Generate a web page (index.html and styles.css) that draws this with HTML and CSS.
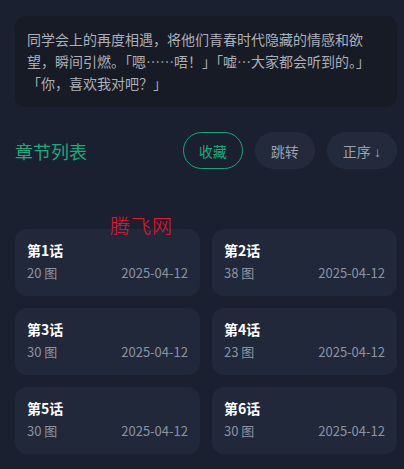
FILE: index.html
```html
<!DOCTYPE html>
<html lang="zh">
<head>
  <meta charset="UTF-8">
  <meta name="viewport" content="width=device-width, initial-scale=1">
  <title>章节列表</title>
  <link rel="stylesheet" href="styles.css">
</head>
<body>
  <div class="desc">同学会上的再度相遇，将他们青春时代隐藏的情感和欲望，瞬间引燃。「嗯……唔！」「嘘…大家都会听到的。」「你，喜欢我对吧？」</div>

  <div class="head">
    <h2>章节列表</h2>
    <div class="actions">
      <button class="fav">收藏</button>
      <button>跳转</button>
      <button>正序 <span class="arrow">↓</span></button>
    </div>
  </div>

  <div class="list">
    <span class="mark">腾飞网</span>
    <div class="card"><div class="name">第1话</div><div class="meta"><span>20 图</span><span>2025-04-12</span></div></div>
    <div class="card"><div class="name">第2话</div><div class="meta"><span>38 图</span><span>2025-04-12</span></div></div>
    <div class="card"><div class="name">第3话</div><div class="meta"><span>30 图</span><span>2025-04-12</span></div></div>
    <div class="card"><div class="name">第4话</div><div class="meta"><span>23 图</span><span>2025-04-12</span></div></div>
    <div class="card"><div class="name">第5话</div><div class="meta"><span>30 图</span><span>2025-04-12</span></div></div>
    <div class="card"><div class="name">第6话</div><div class="meta"><span>30 图</span><span>2025-04-12</span></div></div>
  </div>
</body>
</html>
```

FILE: styles.css
```css
body { margin: 0; padding: 16px 7px 16px 15px; background: #1b2030; font-family: "Noto Sans CJK SC", "Noto Sans", sans-serif; color: #abafb8; }
.desc { background: #171b26; border-radius: 10px; padding: 12px 12px 13px; font-size: 14px; line-height: 22px; }
.head { display: flex; align-items: center; justify-content: space-between; margin-top: 25px; }
h2 { margin: 0; font-size: 18px; font-weight: 400; color: #1aaa7b; }
.actions { display: flex; gap: 12px; }
button { height: 37px; padding: 0 15px; border: 1px solid transparent; border-radius: 19px; background: #222a3c; color: #9aa1ad; font-family: inherit; font-size: 14px; }
button.fav { border-color: #17a878; background: transparent; color: #1aaa7b; }
.arrow { font-family: "Liberation Sans", sans-serif; }
.list { position: relative; display: grid; grid-template-columns: 1fr 1fr; gap: 12px; margin-top: 60px; }
.mark { position: absolute; left: 95px; top: -13px; font-size: 20px; line-height: 20px; color: #e8172f; font-weight: 300; letter-spacing: 1px; }
.card { background: #212839; border-radius: 12px; padding: 11px 12px 14px; }
.name { font-size: 14px; line-height: 20px; font-weight: 700; color: #fff; }
.meta { display: flex; justify-content: space-between; margin-top: 3px; font-size: 13px; line-height: 19px; color: #8b93a2; }
```
